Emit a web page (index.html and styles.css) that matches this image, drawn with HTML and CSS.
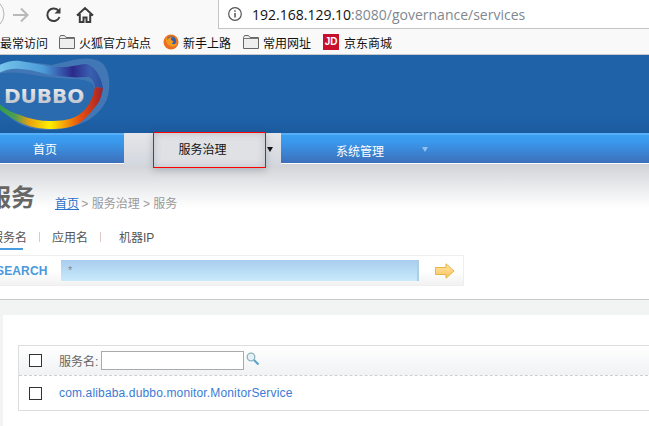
FILE: index.html
```html
<!DOCTYPE html>
<html lang="zh">
<head>
<meta charset="utf-8">
<title>Dubbo</title>
<link rel="stylesheet" href="styles.css">
</head>
<body>
<div class="toolbar">
  <div class="tool-buttons">
    <svg class="ic-circle" width="6" height="29" viewBox="0 0 6 29"><circle cx="-11" cy="14" r="15" fill="none" stroke="#b4b4b4"/></svg>
    <svg class="ic-fwd" width="18" height="18" viewBox="0 0 18 18"><path d="M1 9h14M9 2.500l6.500 6.500-6.500 6.500" fill="none" stroke="#b9b9b9" stroke-width="2"/></svg>
    <svg class="ic-reload" width="18" height="18" viewBox="0 0 18 18"><path d="M14.500 11a6.300 6.300 0 1 1-.8-6" fill="none" stroke="#3c3c3c" stroke-width="2"/><path d="M15.500 1.500v6h-6z" fill="#3c3c3c"/></svg>
    <svg class="ic-home" width="18" height="18" viewBox="0 0 18 18"><path d="M1 9.500L9 2l8 7.500M3.800 8v8h3.700v-4.500h3V16h3.700V8" fill="none" stroke="#3c3c3c" stroke-width="2"/></svg>
  </div>
  <div class="urlbar">
    <svg class="ic-info" width="16" height="16" viewBox="0 0 16 16"><circle cx="8" cy="8" r="6.300" fill="none" stroke="#555" stroke-width="1.200"/><path d="M8 7v4.500M8 4.200v1.500" stroke="#555" stroke-width="1.500"/></svg>
    <span class="url-host">192.168.129.10</span><span class="url-rest">:8080/governance/services</span>
  </div>
</div>
<div class="bookmarks">
  <span class="bm bm-first">最常访问</span>
  <span class="bm bm-item"><svg width="16" height="14" viewBox="0 0 16 14"><path class="folder" d="M.5 2.500V13.500h15V2.500H7L5.500.5H1.500z"/><path d="M.5 3.500h15" stroke="#777"/></svg>火狐官方站点</span>
  <span class="bm bm-item"><svg width="16" height="16" viewBox="0 0 16 16"><circle cx="8" cy="8" r="7.500" fill="#e8701f"/><circle cx="8.500" cy="7" r="4.500" fill="#2f5fb0"/><path d="M3 2.500c-1 4 1 9.500 6 10 3 .2 5-1.500 6-4-2 2-5 2.500-6.500 .5 2.500 0 2-2 .5-2.500-2-1-1-3 1-3.500-3-.5-5 1-5.500 3z" fill="#f49a1f"/></svg>新手上路</span>
  <span class="bm bm-item"><svg width="16" height="14" viewBox="0 0 16 14"><path class="folder" d="M.5 2.500V13.500h15V2.500H7L5.500.5H1.500z"/><path d="M.5 3.500h15" stroke="#777"/></svg>常用网址</span>
  <span class="bm bm-item"><span class="jd">JD</span>京东商城</span>
</div>
<header class="banner">
  <svg class="logo" width="112" height="78" viewBox="0 0 112 78">
    <defs>
      <linearGradient id="band" x1="0" x2="1" y1="0" y2="0">
        <stop offset="0" stop-color="#7cc8ee"/><stop offset=".45" stop-color="#4a9bd8"/><stop offset=".72" stop-color="#2b2a8c"/><stop offset=".88" stop-color="#3a5fb0"/><stop offset="1" stop-color="#2a4f9c"/>
      </linearGradient>
      <linearGradient id="rainbow" x1="0" x2="1" y1="0" y2="0">
        <stop offset="0" stop-color="#2c9c4c"/><stop offset=".17" stop-color="#4f9f50"/><stop offset=".3" stop-color="#e8a010"/><stop offset=".5" stop-color="#fff000"/><stop offset=".78" stop-color="#e8500f"/><stop offset=".95" stop-color="#b52a20"/><stop offset="1" stop-color="#8a2a40"/>
      </linearGradient>
      <linearGradient id="metal" x1="0" x2="0" y1="0" y2="1">
        <stop offset="0" stop-color="#f6f6f8"/><stop offset="1" stop-color="#b4b8c0"/>
      </linearGradient>
    </defs>
    <path d="M-8 14C10 2 34 8 52 10 72 6 88-1 102 8c8 7 9 24 5 36-8 20-32 31-60 31C20 75-8 60-8 14z" fill="#4277b6"/>
    <path d="M-8 20C15 14 30 20 48 22c20 3 34 0 44 6 6 8 2 22-8 32C70 68 40 72 20 64 4 58-8 50-8 20z" fill="#2a6bb0"/>
    <path d="M-5 12C5 7 12 5 20 6c8 1 15 3 23 4 8 2 16 2 24 2 8-1 14-3 20-3 8 3 14 12 16 24l-8-1c-1-5-3-9-7-10-6 0-10 1-18 0-7-1-14-1-20-2-8-2-16-5-30-6C9 13 3 16-5 20z" fill="url(#band)"/>
    <path d="M-3 47C5 54 12 58 20 60c10 4 20 6 30 6 10 0 19-1 25-4 8-4 12-9 15-15 3-5 4-10 5-15l8 1c-1 7-3 14-8 19-6 8-11 13-17 17-8 4-18 5-28 5-14 0-26-4-35-9C8 61 2 57-3 52z" fill="url(#rainbow)"/>
    <text class="logo-text" x="4" y="48">DUBBO</text>
  </svg>
</header>
<nav class="mainnav">
  <a class="nav-home">首页</a>
  <div class="nav-active">
    <a class="nav-active-label">服务治理</a>
    <span class="nav-caret"></span>
  </div>
  <a class="nav-sys">系统管理<span class="nav-caret-light"></span></a>
</nav>
<main class="page">
  <div class="titlebar">
    <h1 class="page-title">服务</h1>
    <div class="crumbs"><a class="crumb-link">首页</a> &gt; 服务治理 &gt; 服务</div>
  </div>
  <div class="tabs">
    <span class="tab tab-on">服务名</span>
    <span class="tab-sep"></span>
    <span class="tab">应用名</span>
    <span class="tab-sep"></span>
    <span class="tab">机器IP</span>
  </div>
  <div class="searchbox">
    <span class="search-label">SEARCH</span>
    <div class="search-input">*</div>
    <svg class="search-go" width="20" height="16" viewBox="0 0 20 16">
      <defs><linearGradient id="arrow" x1="0" x2="0" y1="0" y2="1"><stop offset="0" stop-color="#ffe9a8"/><stop offset="1" stop-color="#fdbf5e"/></linearGradient></defs>
      <path d="M.5 4.500h10.500V.8L19 8l-8 7.200v-3.700H.5z" fill="url(#arrow)" stroke="#e5b53f"/>
    </svg>
  </div>
  <div class="content-band">
    <section class="panel">
      <div class="grid">
        <div class="grid-head">
          <span class="check"></span>
          <span class="filter-label">服务名:</span>
          <span class="filter-input"></span>
          <svg class="ic-search" width="14" height="14" viewBox="0 0 14 14"><circle cx="5" cy="5" r="3.800" fill="#e4f2f6" stroke="#8fb2bd" stroke-width="1.300"/><path d="M8 8l4.500 4.500" stroke="#5ca2c9" stroke-width="2.200"/></svg>
        </div>
        <div class="grid-row">
          <span class="check"></span>
          <a class="service-link">com.alibaba.dubbo.monitor.MonitorService</a>
        </div>
      </div>
    </section>
  </div>
</main>
</body>
</html>
```
FILE: styles.css
```css
* { box-sizing: border-box; }
html, body { margin: 0; padding: 0; }
body {
  width: 649px;
  height: 426px;
  overflow: hidden;
  background: #fff;
  font-family: "Liberation Sans", "Noto Sans CJK SC", sans-serif;
}
a { cursor: pointer; }

.toolbar {
  display: flex;
  height: 29px;
  background: #f9f9fa;
}
.tool-buttons {
  width: 218px;
  flex: none;
  display: flex;
  align-items: center;
}
.ic-circle { margin-right: 6px; }
.ic-fwd { margin-right: 15px; }
.ic-reload { margin-right: 13px; }
.urlbar {
  flex: 1;
  display: flex;
  align-items: center;
  background: #fff;
  border-left: 1px solid #c4c4c4;
  border-bottom: 1px solid #c4c4c4;
  padding-left: 8px;
  font-size: 14px;
  font-family: "Open Sans", "Liberation Sans", sans-serif;
  white-space: nowrap;
}
.ic-info { margin-right: 9px; }
.url-host { color: #111; }
.url-rest { color: #7f8790; }

.bookmarks {
  display: flex;
  align-items: center;
  height: 26px;
  padding-top: 1px;
  background: #f9f9fa;
  border-bottom: 1px solid #c9c9c9;
  font-size: 12px;
  color: #111;
  white-space: nowrap;
}
.bm { display: flex; align-items: center; }
.bm svg { margin-right: 4px; }
.bm-first { margin-right: 11px; }
.bm-item { margin-right: 12px; }
.folder { fill: #eeeeee; stroke: #666; }
.jd {
  width: 16px;
  height: 16px;
  margin-right: 5px;
  background: #c8102e;
  color: #fff;
  font-size: 10px;
  font-weight: bold;
  text-align: center;
  line-height: 16px;
}

.banner {
  height: 78px;
  background: linear-gradient(#1f62a8 0, #1f62a8 80%, #1b5a9e 100%);
}
.logo { display: block; }
.logo-text {
  font-family: "DejaVu Sans", "Liberation Sans", sans-serif;
  font-weight: bold;
  font-size: 20px;
  fill: url(#metal);
}

.mainnav {
  position: relative;
  display: flex;
  height: 31px;
  background: linear-gradient(#3b9ff2 0, #3a98ec 25%, #3c6fb9 100%);
  border-top: 2px solid #56aff6;
  border-bottom: 1px solid #fff;
  font-size: 12px;
  color: #fff;
}
.nav-home {
  width: 124px;
  padding-left: 33px;
  line-height: 31px;
}
.nav-active {
  width: 157px;
  height: 33px;
  margin-top: -2px;
  display: flex;
  padding-left: 29px;
  background: linear-gradient(#e4e6e9, #d3d7de);
}
.nav-active-label {
  width: 113px;
  height: 36px;
  margin-top: -1px;
  flex: none;
  padding-right: 14px;
  outline: 1px solid #ff0000;
  outline-offset: -1px;
  background: #dfe1e5;
  box-shadow: 0 2px 7px rgba(60, 70, 90, .28), inset 0 0 8px rgba(70, 80, 100, .3);
  color: #111;
  text-align: center;
  line-height: 36px;
  z-index: 1;
}
.nav-caret {
  margin: 14px 0 0 1px;
  width: 0;
  height: 0;
  border: 3px solid transparent;
  border-top: 5px solid #111;
  border-bottom: 0;
}
.nav-sys {
  padding-left: 55px;
  line-height: 35px;
  display: flex;
}
.nav-caret-light {
  margin: 12px 0 0 38px;
  width: 0;
  height: 0;
  border: 3px solid transparent;
  border-top: 5px solid #8fc0f0;
  border-bottom: 0;
}

.page {
  background: linear-gradient(#d0d2d6 0, #f3f4f5 32px, #fff 44px);
  height: 262px;
}
.titlebar {
  display: flex;
  align-items: flex-start;
  height: 60px;
  padding-top: 15px;
}
.page-title {
  margin: 0 20px 0 -13px;
  font-size: 24px;
  line-height: 38px;
  font-weight: bold;
  color: #666;
}
.crumbs {
  margin-top: 15px;
  font-size: 12px;
  color: #999;
}
.crumb-link {
  color: #2a6fc9;
  text-decoration: underline;
  margin-right: -1px;
}
.tabs {
  display: flex;
  align-items: center;
  height: 31px;
  padding-bottom: 6px;
  font-size: 12px;
  color: #555;
}
.tab { flex: none; }
.tab-on {
  position: relative;
  margin-left: -9px;
}
.tab-on::after {
  content: "";
  position: absolute;
  left: 0;
  right: 4px;
  bottom: -5px;
  height: 2px;
  background: #4a9be0;
}
.tab-sep {
  width: 1px;
  height: 10px;
  margin: 0 12px;
  background: #e0c8c8;
}
.tab-sep:nth-child(4) { margin-right: 18px; }
.searchbox {
  display: flex;
  align-items: center;
  width: 464px;
  height: 31px;
  margin-bottom: 13px;
  border: 1px solid #eeeeee;
  border-left: 0;
  background: linear-gradient(#fff 50%, #f2f2f2);
}
.search-label {
  width: 60px;
  flex: none;
  margin-left: -4px;
  font-size: 12px;
  font-weight: bold;
  letter-spacing: .15px;
  color: #4a98de;
}
.search-input {
  width: 358px;
  height: 21px;
  flex: none;
  margin-left: 5px;
  padding-left: 7px;
  background: linear-gradient(#a8cdee, #c9eafb);
  border-right: 2px solid #a8cfe6;
  font-size: 11px;
  line-height: 20px;
  color: #888;
}
.search-go { margin-left: 16px; }
.content-band {
  border-top: 1px solid #c9c9c9;
  background: #f2f4f4;
  padding: 15px 0 0 3px;
  height: 127px;
}
.panel {
  background: #fff;
  height: 111px;
  padding: 30px 0 0 15px;
}
.grid {
  width: 640px;
  height: 66px;
  border: 1px solid #dedede;
  border-right: 0;
}
.grid-head {
  display: flex;
  align-items: center;
  height: 30px;
  padding-left: 10px;
  background: linear-gradient(#fff, #f0f2f4);
  border-bottom: 1px dashed #cfcfcf;
  font-size: 12px;
  color: #666;
}
.grid-row {
  display: flex;
  align-items: center;
  height: 34px;
  padding-left: 10px;
  font-size: 12px;
}
.check {
  width: 13px;
  height: 13px;
  flex: none;
  margin-right: 17px;
  border: 1px solid #333;
  background: #fff;
}
.filter-label { margin-right: 3px; }
.filter-input {
  width: 143px;
  height: 19px;
  background: #fff;
  border: 1px solid #aaa;
}
.ic-search { margin-left: 2px; margin-top: -4px; }
.service-link { color: #3a7bd5; letter-spacing: .15px; }
```
